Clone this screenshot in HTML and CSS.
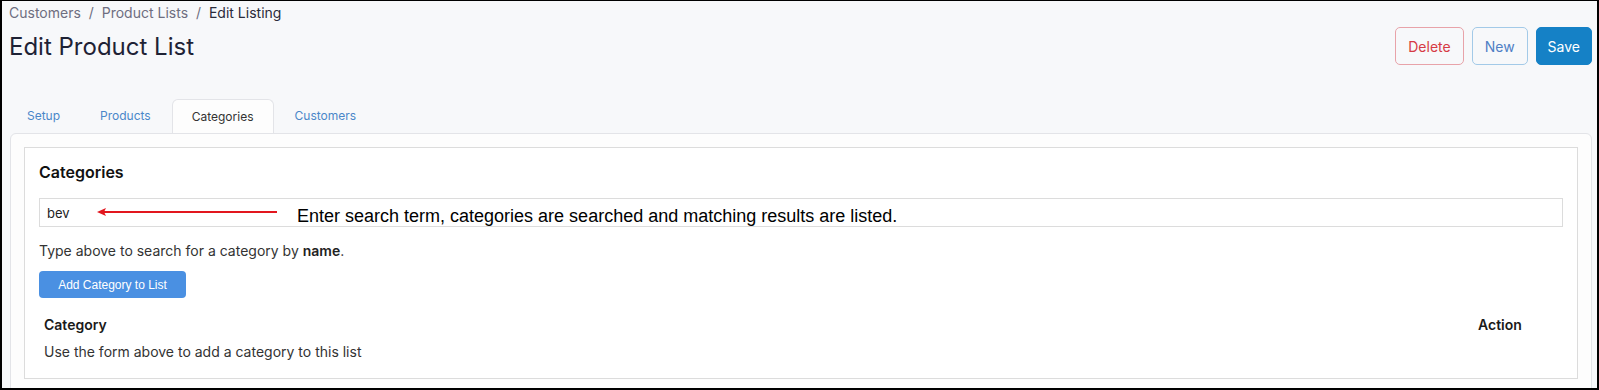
FILE: index.html
```html
<!DOCTYPE html>
<html lang="en">
<head>
  <meta charset="UTF-8">
  <meta name="viewport" content="width=device-width, initial-scale=1.0">
  <title>Edit Product List</title>
  <link rel="stylesheet" href="styles.css">
</head>
<body>
  <div class="frame">
    <!-- Хлебные крошки -->
    <div class="breadcrumb">
      <a href="#">Customers</a>
      <span class="sep">/</span>
      <a href="#">Product Lists</a>
      <span class="sep">/</span>
      <span class="current">Edit Listing</span>
    </div>

    <!-- Заголовок и кнопки -->
    <div class="page-header">
      <h1>Edit Product List</h1>
      <div class="actions">
        <button class="btn btn-delete">Delete</button>
        <button class="btn btn-new">New</button>
        <button class="btn btn-save">Save</button>
      </div>
    </div>

    <!-- Вкладки -->
    <div class="tabs">
      <div class="tab">Setup</div>
      <div class="tab">Products</div>
      <div class="tab active">Categories</div>
      <div class="tab">Customers</div>
    </div>

    <div class="card">
      <div class="panel">
        <h2>Categories</h2>

        <div class="search-wrap">
          <input type="text" class="search" value="bev">
          <svg class="arrow" width="182" height="10" viewBox="0 0 182 10">
            <line x1="4" y1="5" x2="180" y2="5" stroke="#e2161e" stroke-width="2.2"/>
            <polygon points="0,5 9,1 7,5 9,9" fill="#e2161e"/>
          </svg>
          <span class="note">Enter search term, categories are searched and matching results are listed.</span>
        </div>

        <p class="help">Type above to search for a category by <b>name</b>.</p>
        <button class="btn-add">Add Category to List</button>

        <div class="table">
          <div class="th">Category</div>
          <div class="th action">Action</div>
          <div class="td empty">Use the form above to add a category to this list</div>
        </div>
      </div>
    </div>
  </div>
</body>
</html>
```

FILE: styles.css
```css
/* Основа страницы */
body {
  margin: 0;
  font-family: Inter, "Noto Sans", sans-serif;
  color: #222;
}

/* Рамка скриншота */
.frame {
  height: 390px;
  box-sizing: border-box;
  border: 2px solid #000;
  border-top-width: 1px;
  background: #f7f8fa;
  padding: 0 5px 0 7px;
  overflow: hidden;
  display: flex;
  flex-direction: column;
}

/* Хлебные крошки */
.breadcrumb {
  padding-top: 2px;
  font-size: 14px;
  line-height: 20px;
  color: #6e6e80;
}

.breadcrumb a {
  color: #6e6e80;
  text-decoration: none;
}

.breadcrumb .sep {
  margin: 0 4px;
}

.breadcrumb .current {
  color: #2a2b3a;
}

/* Заголовок страницы */
.page-header {
  margin-top: 4px;
  height: 38px;
  display: flex;
  align-items: center;
  justify-content: space-between;
}

h1 {
  margin: 0;
  font-size: 24px;
  font-weight: 400;
  color: #1e2235;
}

.actions {
  display: flex;
  gap: 8px;
}

.btn {
  height: 38px;
  padding: 0 11px;
  font-family: Inter, sans-serif;
  font-size: 14px;
  border-radius: 5px;
  background: transparent;
  cursor: pointer;
}

.btn-delete {
  padding: 0 12px;
  border: 1px solid #e8a3a9;
  color: #d63a44;
}

.btn-new {
  padding: 0 12px;
  border: 1px solid #a3cae8;
  color: #4f80c5;
}

.btn-save {
  border: 1px solid #1581c6;
  background: #1581c6;
  color: #fff;
}

/* Вкладки */
.tabs {
  margin-top: 34px;
  display: flex;
  gap: 2px;
}

.tab {
  height: 34px;
  line-height: 34px;
  padding: 0 19px;
  font-size: 12px;
  color: #4a87c9;
  box-sizing: border-box;
}

.tab:first-child {
  margin-left: -1px;
}

.tab.active {
  background: #fdfdfd;
  color: #333;
  border: 1px solid #e3e4e8;
  border-bottom: none;
  border-radius: 6px 6px 0 0;
  line-height: 33px;
  margin-bottom: -1px;
  position: relative;
  z-index: 1;
}

/* Карточка */
.card {
  flex: 1;
  margin-left: 1px;
  background: #fdfdfd;
  border: 1px solid #e3e4e8;
  border-radius: 6px 6px 0 0;
  padding: 13px;
}

.panel {
  background: #fff;
  border: 1px solid #dcdcdc;
  padding: 12px 14px 13px;
}

h2 {
  margin: 0;
  font-size: 16px;
  line-height: 24px;
  font-weight: 600;
  color: #111;
}

/* Поле поиска с пояснением */
.search-wrap {
  position: relative;
  margin-top: 14px;
}

.search {
  display: block;
  width: 100%;
  height: 29px;
  box-sizing: border-box;
  border: 1px solid #dcdcdc;
  padding: 0 7px;
  font-family: Inter, sans-serif;
  font-size: 13px;
  color: #222;
  outline: none;
}

.arrow {
  position: absolute;
  left: 58px;
  top: 9px;
}

.note {
  position: absolute;
  left: 258px;
  top: 8px;
  font-family: "Liberation Sans", Arial, sans-serif;
  font-size: 18px;
  line-height: 20px;
  color: #000;
  white-space: nowrap;
}

.help {
  margin: 14px 0 0;
  font-size: 14px;
  line-height: 20px;
  color: #333;
}

.help b {
  font-weight: 600;
  color: #222;
}

.btn-add {
  margin-top: 10px;
  height: 27px;
  width: 147px;
  border: none;
  border-radius: 4px;
  background: #4a90e2;
  color: #fff;
  font-family: "Liberation Sans", Arial, sans-serif;
  font-size: 12px;
  cursor: pointer;
}

/* Таблица категорий */
.table {
  margin-top: 14px;
  display: grid;
  grid-template-columns: 1fr 85px;
  font-size: 14px;
}

.th {
  height: 26px;
  line-height: 26px;
  padding-left: 5px;
  font-weight: 600;
  color: #1a1a1a;
}

.th.action {
  padding-left: 0;
}

.td {
  height: 27px;
  line-height: 27px;
  padding-left: 5px;
  color: #333;
}

.td.empty {
  grid-column: 1 / 3;
}
```
